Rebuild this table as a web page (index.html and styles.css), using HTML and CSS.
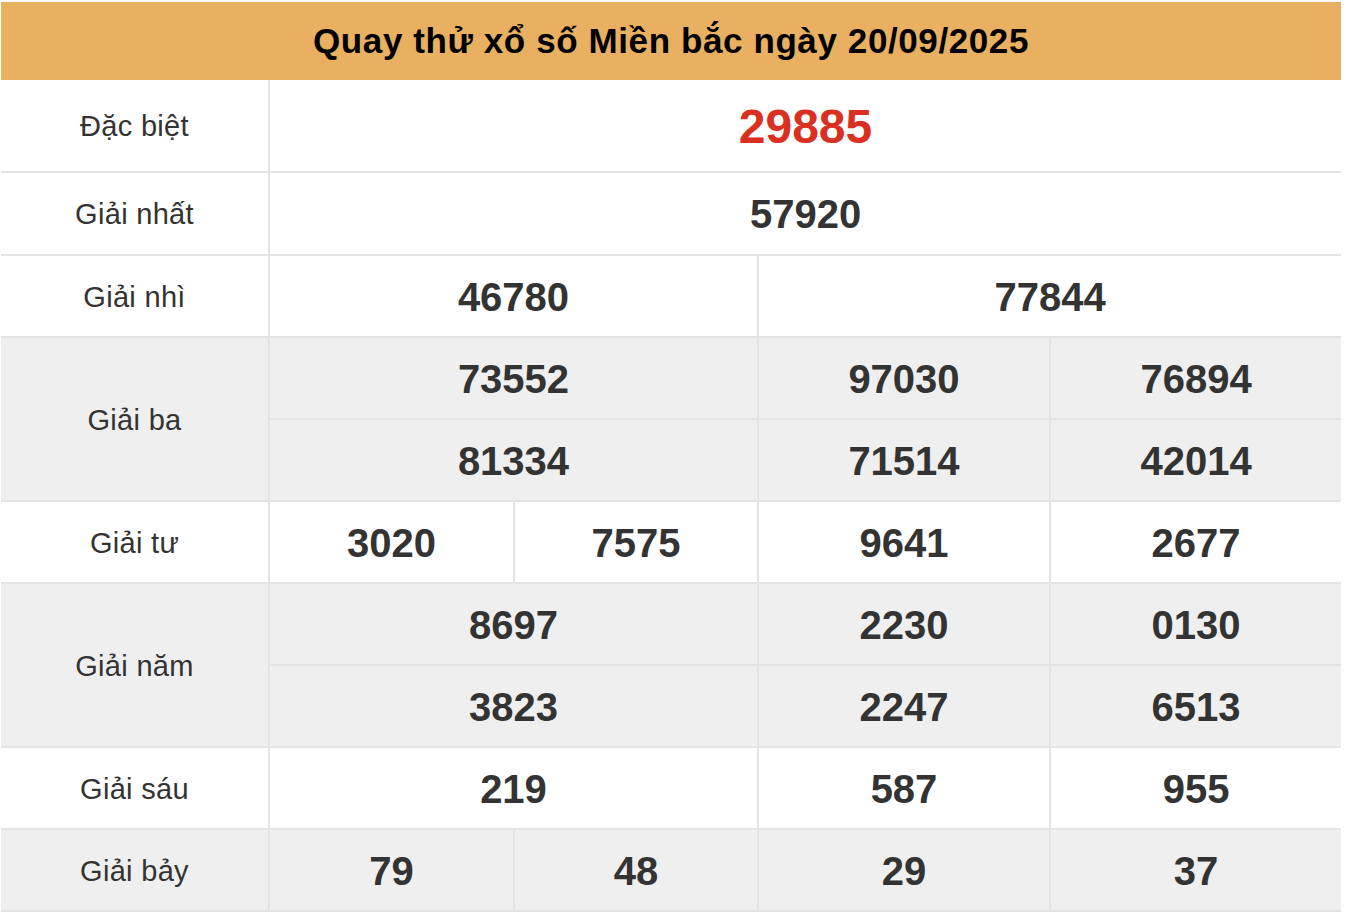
FILE: index.html
```html
<!DOCTYPE html>
<html lang="vi">
<head>
<meta charset="utf-8">
<title>Quay thử xổ số Miền bắc</title>
<link rel="stylesheet" href="styles.css">
</head>
<body>
<table class="kq">
  <colgroup>
    <col class="c-label">
    <col class="c-a">
    <col class="c-b">
    <col class="c-c">
    <col class="c-d">
  </colgroup>
  <thead>
    <tr class="r-head"><th colspan="5">Quay thử xổ số Miền bắc ngày 20/09/2025</th></tr>
  </thead>
  <tbody>
    <tr class="r-db"><td class="lbl">Đặc biệt</td><td colspan="4" class="num red">29885</td></tr>
    <tr class="r1"><td class="lbl">Giải nhất</td><td colspan="4" class="num">57920</td></tr>
    <tr><td class="lbl">Giải nhì</td><td colspan="2" class="num">46780</td><td colspan="2" class="num">77844</td></tr>
    <tr class="gray"><td class="lbl" rowspan="2">Giải ba</td><td colspan="2" class="num">73552</td><td class="num">97030</td><td class="num">76894</td></tr>
    <tr class="gray"><td colspan="2" class="num">81334</td><td class="num">71514</td><td class="num">42014</td></tr>
    <tr><td class="lbl">Giải tư</td><td class="num">3020</td><td class="num">7575</td><td class="num">9641</td><td class="num">2677</td></tr>
    <tr class="gray"><td class="lbl" rowspan="2">Giải năm</td><td colspan="2" class="num">8697</td><td class="num">2230</td><td class="num">0130</td></tr>
    <tr class="gray"><td colspan="2" class="num">3823</td><td class="num">2247</td><td class="num">6513</td></tr>
    <tr><td class="lbl">Giải sáu</td><td colspan="2" class="num">219</td><td class="num">587</td><td class="num">955</td></tr>
    <tr class="gray"><td class="lbl">Giải bảy</td><td class="num">79</td><td class="num">48</td><td class="num">29</td><td class="num">37</td></tr>
  </tbody>
</table>
</body>
</html>
```

FILE: styles.css
```css
html, body {
  margin: 0;
  padding: 0;
  background: #ffffff;
}

body {
  font-family: "Liberation Sans", Arial, Helvetica, sans-serif;
  color: #333333;
  padding: 2px 0 0 1px;
}

.kq {
  width: 1340px;
  border-collapse: collapse;
  table-layout: fixed;
}

.c-label { width: 268px; }
.c-a { width: 245px; }
.c-b { width: 244px; }
.c-c { width: 292px; }
.c-d { width: 291px; }

.r-head th {
  background: #e8b060;
  color: #000000;
  font-size: 35px;
  letter-spacing: 0.6px;
  font-weight: 700;
  height: 78px;
  padding: 0;
  text-align: center;
  vertical-align: middle;
}

.kq td {
  border: 2px solid #e4e4e4;
  text-align: center;
  vertical-align: middle;
  padding: 2px 0 0;
  height: 78px;
}

.kq td.lbl {
  border-left: none;
}

.kq tr > td:last-child {
  border-right: none;
}

.kq .r-db td {
  border-top: none;
  height: 89px;
}

.kq .r1 td {
  height: 79px;
}

.gray td {
  background: #efefef;
}

.lbl {
  font-size: 29px;
  letter-spacing: 0.3px;
  font-weight: 400;
  color: #333333;
}

.num {
  font-size: 40px;
  font-weight: 700;
  color: #333333;
}

.num.red {
  color: #da3022;
  font-size: 48px;
}
```
